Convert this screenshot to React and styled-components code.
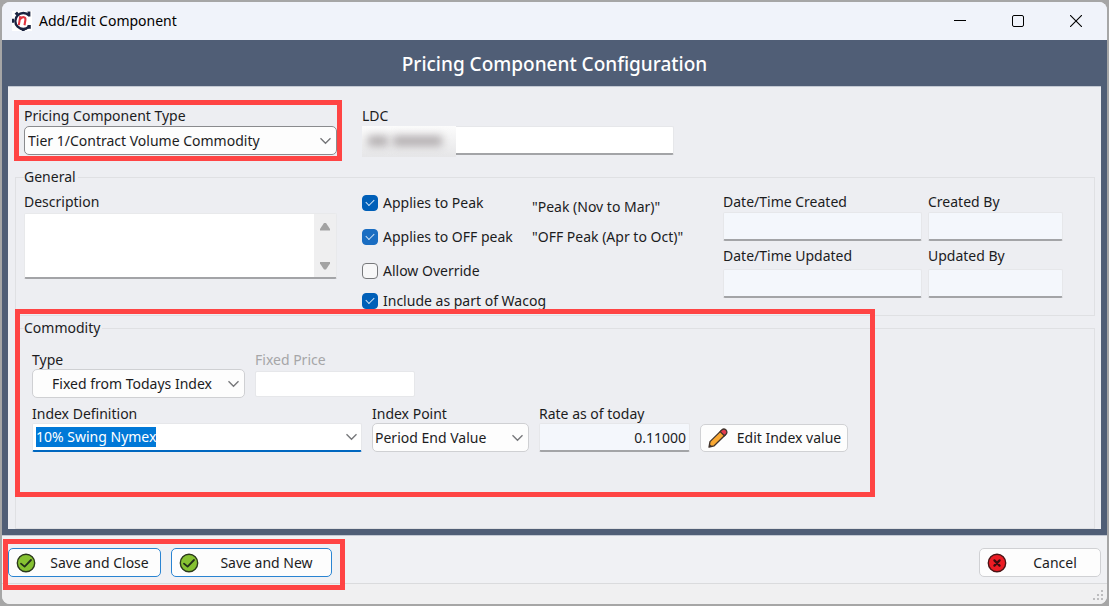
import React, { useEffect, useRef } from "react";
import styled, { createGlobalStyle, css } from "styled-components";

const GlobalStyle = createGlobalStyle`
  *, *::before, *::after { box-sizing: border-box; }
  body {
    margin: 0;
    background: #a6a6a6;
    color: #1c1c1e;
    font-family: "Noto Sans", "Open Sans", sans-serif;
    font-size: 14px;
    line-height: 16px;
  }
  button, input, select, textarea { font: inherit; color: inherit; margin: 0; }
`;

const Backdrop = styled.div`
  min-height: 100vh;
  padding: 2px;
  display: flex;
`;

const Window = styled.main`
  flex: 1;
  min-width: 0;
  display: flex;
  flex-direction: column;
  border-radius: 8px;
  overflow: hidden;
  background: #f0f1f4;
`;

const TitleBar = styled.header`
  height: 38px;
  display: flex;
  align-items: center;
  gap: 7px;
  padding: 0 2px 0 10px;
  background: #f0f3fa;
  color: #000;
`;

const WindowTitle = styled.span`
  flex: 1;
`;

const WindowButtons = styled.div`
  display: flex;
  height: 100%;
`;

const WindowButton = styled.button`
  width: 58px;
  border: 0;
  padding: 0;
  background: transparent;
  display: flex;
  align-items: center;
  justify-content: center;
`;

const Frame = styled.section`
  flex: 1;
  display: flex;
  flex-direction: column;
  padding: 0 6px 6px;
  background: #505e76;
`;

const FrameTitle = styled.h1`
  margin: 0;
  height: 46px;
  display: flex;
  align-items: center;
  justify-content: center;
  padding-top: 2px;
  color: #fff;
  font-size: 19px;
  font-weight: 500;
  line-height: 24px;
`;

const Panel = styled.form`
  flex: 1;
  display: flex;
  flex-direction: column;
  padding: 21px 6px 0 7px;
  background: #edeef2;
  border-top: 1px solid #c3c9d3;
`;

const columns = css`
  display: grid;
  grid-template-columns: 313fr 336fr 340fr;
  column-gap: 25px;
`;

const TopRow = styled.div`
  ${columns}
  padding: 0 32px 0 9px;
`;

const Group = styled.fieldset`
  margin: ${(p) => p.$top}px 0 0;
  padding: 0 31px 0 ${(p) => p.$left}px;
  border: 1px solid #dfe0e3;
  min-width: 0;
  flex: ${(p) => (p.$fill ? 1 : "none")};
`;

const Legend = styled.legend`
  margin-left: ${(p) => p.$left}px;
  padding: 0 2px 0 0;
  height: 18px;
  line-height: 18px;
`;

const GeneralGrid = styled.div`
  ${columns}
`;

const Field = styled.div`
  display: flex;
  flex-direction: column;
  gap: ${(p) => p.$gap ?? 2}px;
  width: ${(p) => (p.$width ? `${p.$width}px` : "auto")};
  min-width: 0;
`;

const Label = styled.label`
  height: 16px;
  white-space: nowrap;
  color: ${(p) => (p.$muted ? "#a6a6a8" : "inherit")};
`;

const Annotated = styled.div`
  position: relative;
  width: ${(p) => (p.$hug ? "fit-content" : "auto")};

  &::after {
    content: "";
    position: absolute;
    inset: ${(p) => p.$inset};
    border: 5px solid #ff4444;
    pointer-events: none;
    z-index: 2;
  }
`;

const SelectBox = styled.div`
  position: relative;
  height: 29px;

  svg {
    position: absolute;
    right: 5px;
    top: 11px;
    pointer-events: none;
  }
`;

const Select = styled.select`
  appearance: none;
  width: 100%;
  height: 100%;
  padding: 0 20px 0 ${(p) => p.$indent ?? 3}px;
  line-height: 22px;
  border: 1px solid ${(p) => (p.$strong ? "#8a8b8e" : "#cfd0d3")};
  border-radius: 5px;
  background: #fdfdfd;
`;

const TextInput = styled.input`
  width: 100%;
  height: ${(p) => p.$height ?? 29}px;
  padding: 0 3px;
  line-height: 20px;
  border: 1px solid #e6e7ea;
  border-bottom: ${(p) => (p.$flat ? "1px solid #e6e7ea" : "2px solid #a3a4a7")};
  border-radius: 2px;
  background: ${(p) => (p.readOnly ? "#f4f7fc" : "#fff")};
  text-align: ${(p) => (p.$numeric ? "right" : "left")};
  outline: none;
`;

const LdcBox = styled.div`
  position: relative;
  padding-right: 24px;
`;

const Redaction = styled.span`
  position: absolute;
  left: 0;
  top: 0;
  width: 94px;
  height: 31px;
  display: flex;
  align-items: center;
  gap: 5px;
  padding: 0 14px 2px 6px;
  background: linear-gradient(#fcfcfc, #e6e6e8);
  overflow: hidden;

  &::before, &::after {
    content: "";
    height: 10px;
    background: #b0abad;
    filter: blur(4px);
  }
  &::before { flex: 2; }
  &::after { flex: 5; }
`;

const AreaBox = styled.div`
  display: flex;
  height: 66px;
  background: #fff;
  border: 1px solid #e8e9eb;
  border-bottom: 2px solid #a3a4a7;
  border-radius: 2px;
`;

const Area = styled.textarea`
  flex: 1;
  min-width: 0;
  border: 0;
  padding: 3px;
  background: transparent;
  resize: none;
  outline: none;
  overflow: hidden;
`;

const ScrollRail = styled.div`
  width: 22px;
  padding: 8px 0 6px;
  display: flex;
  flex-direction: column;
  justify-content: space-between;
  align-items: center;
  background: #efeff0;
`;

const Checks = styled.div`
  display: grid;
  grid-template-columns: 170px auto;
  grid-template-rows: 34px 34px 33px 28px;
  align-items: center;
  justify-content: start;
`;

const CheckLabel = styled.label`
  display: flex;
  align-items: center;
  gap: 5px;
  white-space: nowrap;
`;

const Checkbox = styled.input`
  appearance: none;
  flex: none;
  width: 16px;
  height: 16px;
  border: 1px solid #77787b;
  border-radius: 4px;
  background: #f7f7f8;
  display: grid;
  place-items: center;

  &:checked {
    background: ${(p) => (p.$light ? "#1a6dc2" : "#005fb8")};
    border-color: ${(p) => (p.$light ? "#1a6dc2" : "#005fb8")};
  }
  &:checked::before {
    content: "";
    width: 8px;
    height: 5px;
    margin-bottom: 3px;
    border: solid #cfe3f6;
    border-width: 0 0 1px 1px;
    transform: rotate(-45deg);
  }
`;

const Note = styled.span`
  white-space: nowrap;
  padding-top: ${(p) => (p.$low ? 8 : 0)}px;
`;

const Stamps = styled.div`
  display: grid;
  grid-template-columns: 199fr 135fr;
  gap: 7px 6px;
  align-content: start;
  padding-top: 8px;
`;

const DescriptionField = styled(Field)`
  padding-top: 8px;
`;

const CommodityRows = styled.div`
  display: flex;
  flex-direction: column;
  gap: 8px;
  padding-top: 15px;
`;

const Row = styled.div`
  display: flex;
  align-items: ${(p) => (p.$end ? "flex-end" : "flex-start")};
  gap: 10px;
`;

const Combo = styled.div`
  height: 29px;
  display: flex;
  align-items: center;
  background: #fff;
  border: 1px solid #e6e7ea;
  border-bottom: 2px solid #0067c0;
  border-radius: 2px;
`;

const ComboInput = styled.input`
  flex: 1;
  min-width: 0;
  padding: 0 0 0 3px;
  border: 0;
  background: transparent;
  outline: none;
  line-height: 20px;

  &::selection { background: #0078d7; color: #fff; }
`;

const ComboToggle = styled.button`
  width: 20px;
  height: 100%;
  padding: 0;
  border: 0;
  background: transparent;
  display: grid;
  place-items: center;
`;

const Button = styled.button`
  width: ${(p) => p.$width}px;
  height: ${(p) => p.$height ?? 29}px;
  display: flex;
  align-items: center;
  padding: 0 5px 0 7px;
  border: 1px solid ${(p) => (p.$accent ? "#2a84d2" : "#d0d1d4")};
  border-radius: 5px;
  background: #fdfdfd;
  white-space: nowrap;

  svg { flex: none; }
`;

const ButtonText = styled.span`
  flex: 1;
  text-align: center;
  padding-left: 8px;
`;

const Footer = styled.footer`
  height: 49px;
  display: flex;
  justify-content: space-between;
  align-items: center;
  padding: 6px 6px 0;
  border-top: 1px solid #c3c9d3;
  border-bottom: 1px solid #dadbdd;
  background: #f0f1f4;
`;

const SaveButtons = styled.div`
  display: flex;
  gap: 10px;
`;

const StatusStrip = styled.div`
  height: 20px;
  display: flex;
  justify-content: flex-end;
  align-items: flex-end;
  padding: 0 3px 3px;
  background: #f0f0f1;
`;

const Chevron = () => (
  <svg width="13" height="8" viewBox="0 0 13 8" fill="none" stroke="#77787b" strokeWidth="1.4" aria-hidden="true">
    <path d="M1.5 1.2 6.5 6.2 11.5 1.2" />
  </svg>
);

const Triangle = ({ down }) => (
  <svg width="12" height="10" viewBox="0 0 12 10" aria-hidden="true">
    <path d={down ? "M1 1h10v1.5L7 8.6H5L1 2.5z" : "M5 1h2l4 6v1.6H1V7z"} fill="#a3a3a3" />
  </svg>
);

const Logo = () => (
  <svg width="20" height="20" viewBox="0 0 20 20" aria-hidden="true">
    <rect width="20" height="20" fill="#fff" />
    <path d="M17 4.4A8 8 0 1 0 17 15.6" fill="none" stroke="#1b2440" strokeWidth="2.4" />
    <path d="M15.4.6h3v5h-2.4zM15.4 14h3.4v3.8h-3zM9.5 17h3.2v3H9.8zM0 7.8h2v4H0zM2.6 2.8 5 .6 6.8 2.4 4.6 4.6z" fill="#1b2440" />
    <path d="M8.3 5.2 6.8 14.2M7.9 8.2Q10 5.8 12 6.2 13.8 6.6 13.4 9L12.5 14.2" fill="none" stroke="#e0343f" strokeWidth="2.1" />
  </svg>
);

const CheckIcon = () => (
  <svg width="20" height="20" viewBox="0 0 20 20" aria-hidden="true">
    <circle cx="10" cy="10" r="8.7" fill="#86c232" stroke="#2b3a1c" strokeWidth="1.4" />
    <path d="M5 10.6 8.6 13.6 15 7" fill="none" stroke="#22301a" strokeWidth="1.8" strokeLinecap="round" strokeLinejoin="round" />
  </svg>
);

const CrossIcon = () => (
  <svg width="20" height="20" viewBox="0 0 20 20" aria-hidden="true">
    <circle cx="10" cy="10" r="8.7" fill="#ec1c24" stroke="#4a1416" strokeWidth="1.4" />
    <path d="M7.4 7.4 12.6 12.6M12.6 7.4 7.4 12.6" stroke="#3c0c10" strokeWidth="2.2" strokeLinecap="round" />
  </svg>
);

const PencilIcon = () => (
  <svg width="20" height="20" viewBox="0 0 20 20" strokeLinejoin="round" aria-hidden="true">
    <path d="M1 19 2 13.6 13.2 2.6 17.4 6.8 6.2 17.8z" fill="#f9a832" stroke="#40332c" strokeWidth="1.3" />
    <path d="M12.2 3.6 14 1.8Q15.8.2 17.8 1.8 19.8 4 18.2 6L16.4 7.8z" fill="#e33b4c" stroke="#40332c" strokeWidth="1.3" />
    <path d="M1 19 1.6 16 4 18.3z" fill="#40332c" />
  </svg>
);

const Grip = () => (
  <svg width="11" height="11" viewBox="0 0 11 11" fill="#bdbdbf" aria-hidden="true">
    <path d="M8 0h2v2H8zM4 4h2v2H4zM8 4h2v2H8zM0 8h2v2H0zM4 8h2v2H4zM8 8h2v2H8z" />
  </svg>
);

const SelectField = ({ id, label, value, width, indent, strong, gap }) => (
  <Field $width={width} $gap={gap}>
    <Label htmlFor={id}>{label}</Label>
    <SelectBox>
      <Select id={id} defaultValue={value} $indent={indent} $strong={strong}>
        <option>{value}</option>
      </Select>
      <Chevron />
    </SelectBox>
  </Field>
);

const StampField = ({ id, label, gap }) => (
  <Field $gap={gap}>
    <Label htmlFor={id}>{label}</Label>
    <TextInput id={id} readOnly />
  </Field>
);

const Check = ({ label, checked, light }) => (
  <CheckLabel>
    <Checkbox type="checkbox" defaultChecked={checked} $light={light} />
    {label}
  </CheckLabel>
);

export default function App() {
  const indexRef = useRef(null);

  useEffect(() => {
    indexRef.current.focus();
    indexRef.current.select();
  }, []);

  return (
    <>
      <GlobalStyle />
      <Backdrop>
        <Window>
          <TitleBar>
            <Logo />
            <WindowTitle>Add/Edit Component</WindowTitle>
            <WindowButtons>
              <WindowButton aria-label="Minimize">
                <svg width="12" height="12" viewBox="0 0 12 12" stroke="#000"><path d="M0 5.5h12" /></svg>
              </WindowButton>
              <WindowButton aria-label="Maximize">
                <svg width="12" height="12" viewBox="0 0 12 12" stroke="#000" fill="none"><rect x=".5" y=".5" width="11" height="11" rx="1.5" /></svg>
              </WindowButton>
              <WindowButton aria-label="Close">
                <svg width="12" height="12" viewBox="0 0 12 12" stroke="#000" strokeWidth="1.1"><path d="M0 0 12 12M12 0 0 12" /></svg>
              </WindowButton>
            </WindowButtons>
          </TitleBar>

          <Frame>
            <FrameTitle>Pricing Component Configuration</FrameTitle>
            <Panel onSubmit={(e) => e.preventDefault()}>
              <TopRow>
                <Annotated $inset="-8px -5px -6px -10px">
                  <SelectField id="component-type" label="Pricing Component Type" value="Tier 1/Contract Volume Commodity" strong />
                </Annotated>
                <Field>
                  <Label htmlFor="ldc">LDC</Label>
                  <LdcBox>
                    <TextInput id="ldc" />
                    <Redaction />
                  </LdcBox>
                </Field>
              </TopRow>

              <Group $top={13} $left={8}>
                <Legend $left={0}>General</Legend>
                <GeneralGrid>
                  <DescriptionField $gap={3}>
                    <Label htmlFor="description">Description</Label>
                    <AreaBox>
                      <Area id="description" />
                      <ScrollRail>
                        <Triangle />
                        <Triangle down />
                      </ScrollRail>
                    </AreaBox>
                  </DescriptionField>
                  <Checks>
                    <Check label="Applies to Peak" checked />
                    <Note $low>"Peak (Nov to Mar)"</Note>
                    <Check label="Applies to OFF peak" checked light />
                    <Note>"OFF Peak (Apr to Oct)"</Note>
                    <Check label="Allow Override" />
                    <span />
                    <Check label="Include as part of Wacog" checked />
                  </Checks>
                  <Stamps>
                    <StampField id="created" label="Date/Time Created" />
                    <StampField id="created-by" label="Created By" />
                    <StampField id="updated" label="Date/Time Updated" gap={5} />
                    <StampField id="updated-by" label="Updated By" gap={5} />
                  </Stamps>
                </GeneralGrid>
              </Group>

              <Group $top={3} $left={16} $fill>
                <Legend $left={-8}>Commodity</Legend>
                <Annotated $hug $inset="-28px -27px -45px -17px">
                  <CommodityRows>
                    <Row>
                      <SelectField id="type" label="Type" value="Fixed from Todays Index" width={213} indent={19} gap={1} />
                      <Field $width={160} $gap={3}>
                        <Label htmlFor="fixed-price" $muted>Fixed Price</Label>
                        <TextInput id="fixed-price" disabled $flat $height={26} />
                      </Field>
                    </Row>
                    <Row $end>
                      <Field $width={330} $gap={1}>
                        <Label htmlFor="index-definition">Index Definition</Label>
                        <Combo>
                          <ComboInput id="index-definition" ref={indexRef} defaultValue="10% Swing Nymex" />
                          <ComboToggle type="button" aria-label="Show index definitions">
                            <Chevron />
                          </ComboToggle>
                        </Combo>
                      </Field>
                      <SelectField id="index-point" label="Index Point" value="Period End Value" width={157} indent={2} gap={1} />
                      <Field $width={151} $gap={1}>
                        <Label htmlFor="rate">Rate as of today</Label>
                        <TextInput id="rate" readOnly $numeric defaultValue="0.11000" />
                      </Field>
                      <Button type="button" $width={148} $height={28}>
                        <PencilIcon />
                        <ButtonText>Edit Index value</ButtonText>
                      </Button>
                    </Row>
                  </CommodityRows>
                </Annotated>
              </Group>
            </Panel>
          </Frame>

          <Footer>
            <Annotated $inset="-9px -13px -13px -5px">
              <SaveButtons>
                <Button $accent $width={153}>
                  <CheckIcon />
                  <ButtonText>Save and Close</ButtonText>
                </Button>
                <Button $accent $width={161}>
                  <CheckIcon />
                  <ButtonText>Save and New</ButtonText>
                </Button>
              </SaveButtons>
            </Annotated>
            <Button $width={122}>
              <CrossIcon />
              <ButtonText>Cancel</ButtonText>
            </Button>
          </Footer>
          <StatusStrip>
            <Grip />
          </StatusStrip>
        </Window>
      </Backdrop>
    </>
  );
}
